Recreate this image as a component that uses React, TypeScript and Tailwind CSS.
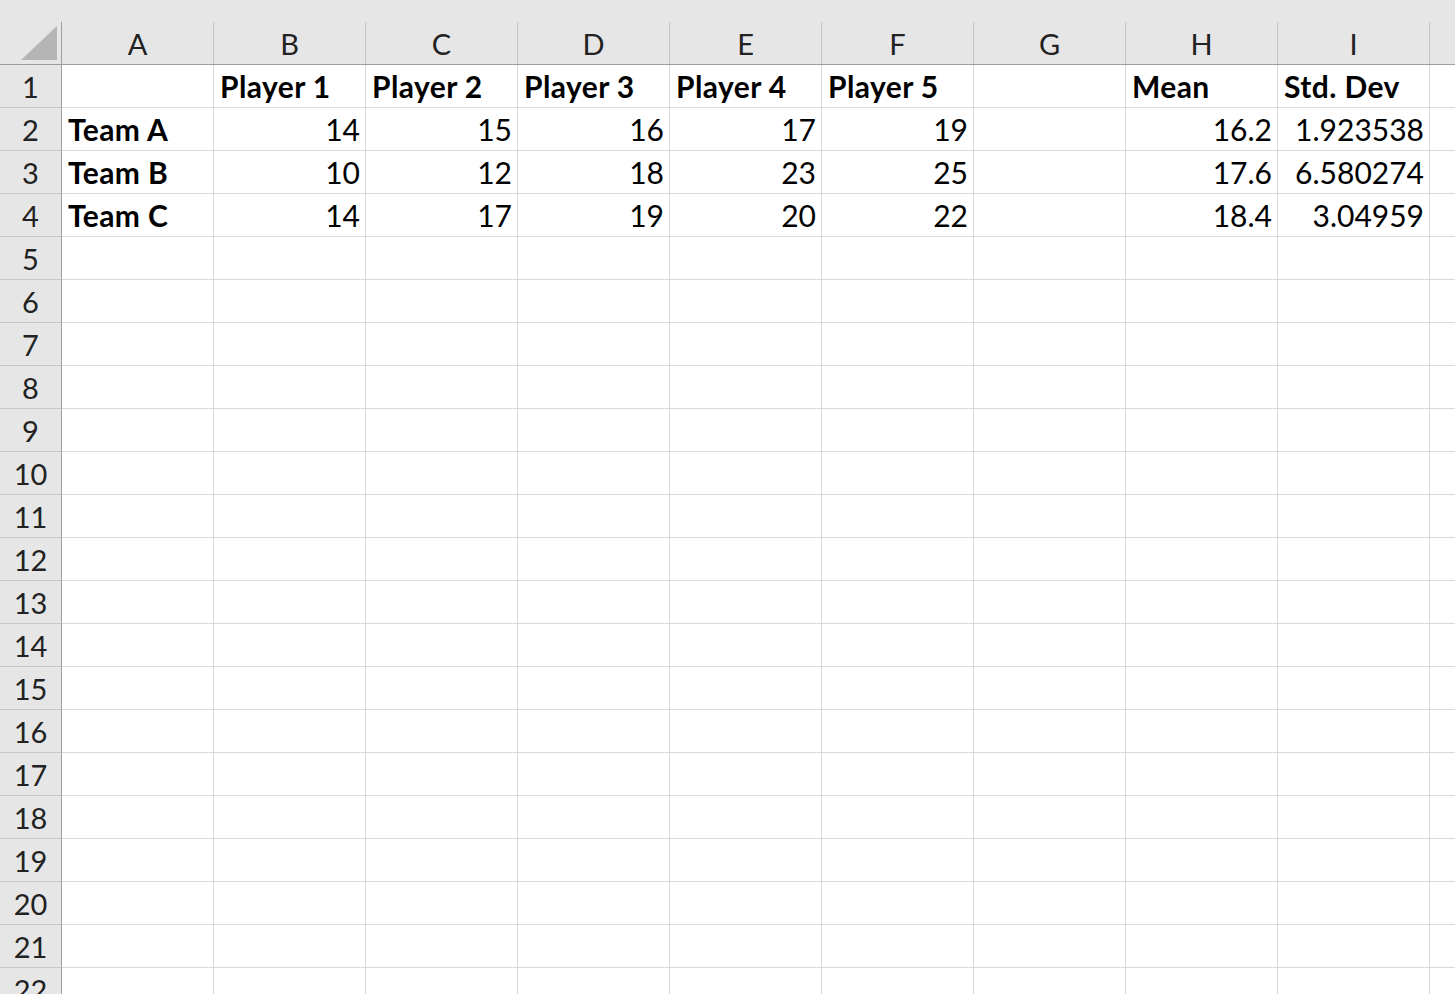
import React from 'react';

const COLUMNS = ['A', 'B', 'C', 'D', 'E', 'F', 'G', 'H', 'I', ''];

type Cell = { v: string; bold?: boolean; right?: boolean };

const DATA: Record<number, Cell[]> = {
  1: [
    { v: '' },
    { v: 'Player 1', bold: true },
    { v: 'Player 2', bold: true },
    { v: 'Player 3', bold: true },
    { v: 'Player 4', bold: true },
    { v: 'Player 5', bold: true },
    { v: '' },
    { v: 'Mean', bold: true },
    { v: 'Std. Dev', bold: true },
  ],
  2: [
    { v: 'Team A', bold: true },
    { v: '14', right: true },
    { v: '15', right: true },
    { v: '16', right: true },
    { v: '17', right: true },
    { v: '19', right: true },
    { v: '' },
    { v: '16.2', right: true },
    { v: '1.923538', right: true },
  ],
  3: [
    { v: 'Team B', bold: true },
    { v: '10', right: true },
    { v: '12', right: true },
    { v: '18', right: true },
    { v: '23', right: true },
    { v: '25', right: true },
    { v: '' },
    { v: '17.6', right: true },
    { v: '6.580274', right: true },
  ],
  4: [
    { v: 'Team C', bold: true },
    { v: '14', right: true },
    { v: '17', right: true },
    { v: '19', right: true },
    { v: '20', right: true },
    { v: '22', right: true },
    { v: '' },
    { v: '18.4', right: true },
    { v: '3.04959', right: true },
  ],
};

const ROWS = Array.from({ length: 22 }, (_, i) => i + 1);

function CornerCell() {
  return (
    <div className="w-[62px] h-[42px] shrink-0 border-r border-[#9e9e9e] flex items-end justify-end pr-[4px] pb-[4px]">
      <svg width="36" height="34" viewBox="0 0 36 34">
        <polygon points="36,0 36,34 0,34" fill="#b5b5b5" />
      </svg>
    </div>
  );
}

export default function App() {
  return (
    <div
      className="w-[1455px] h-[994px] overflow-hidden bg-white text-black"
      style={{ fontFamily: 'Lato, "Open Sans", sans-serif' }}
    >
      {/* top strip above column headers */}
      <div className="h-[22px] bg-[#e6e6e6]" />

      {/* column headers */}
      <div className="flex h-[43px] bg-[#e6e6e6] border-b border-[#9e9e9e]">
        <CornerCell />
        {COLUMNS.map((c, i) => (
          <div
            key={i}
            className={`h-[42px] flex items-center justify-center text-[29px] text-[#222] leading-none ${
              c ? 'w-[152px] shrink-0 border-r border-[#c6c6c6]' : 'flex-1'
            }`}
          >
            {c}
          </div>
        ))}
      </div>

      {/* body rows */}
      {ROWS.map((r) => {
        const cells = DATA[r] || [];
        return (
          <div key={r} className="flex h-[43px]">
            <div className="w-[62px] shrink-0 bg-[#e6e6e6] border-r border-[#9e9e9e] border-b border-b-[#c6c6c6] flex items-center justify-center text-[29px] text-[#222] leading-none">
              {r}
            </div>
            {COLUMNS.map((c, i) => {
              const cell = cells[i];
              return (
                <div
                  key={i}
                  className={`border-b border-[#d9d9d9] flex items-center leading-none whitespace-nowrap ${
                    c ? 'w-[152px] shrink-0 border-r' : 'flex-1'
                  } ${cell?.right ? 'justify-end pr-[5px]' : 'justify-start pl-[6px]'} ${
                    cell?.bold ? 'font-bold text-[30px] tracking-[0.4px]' : 'text-[30px]'
                  }`}
                >
                  {cell?.v}
                </div>
              );
            })}
          </div>
        );
      })}
    </div>
  );
}
